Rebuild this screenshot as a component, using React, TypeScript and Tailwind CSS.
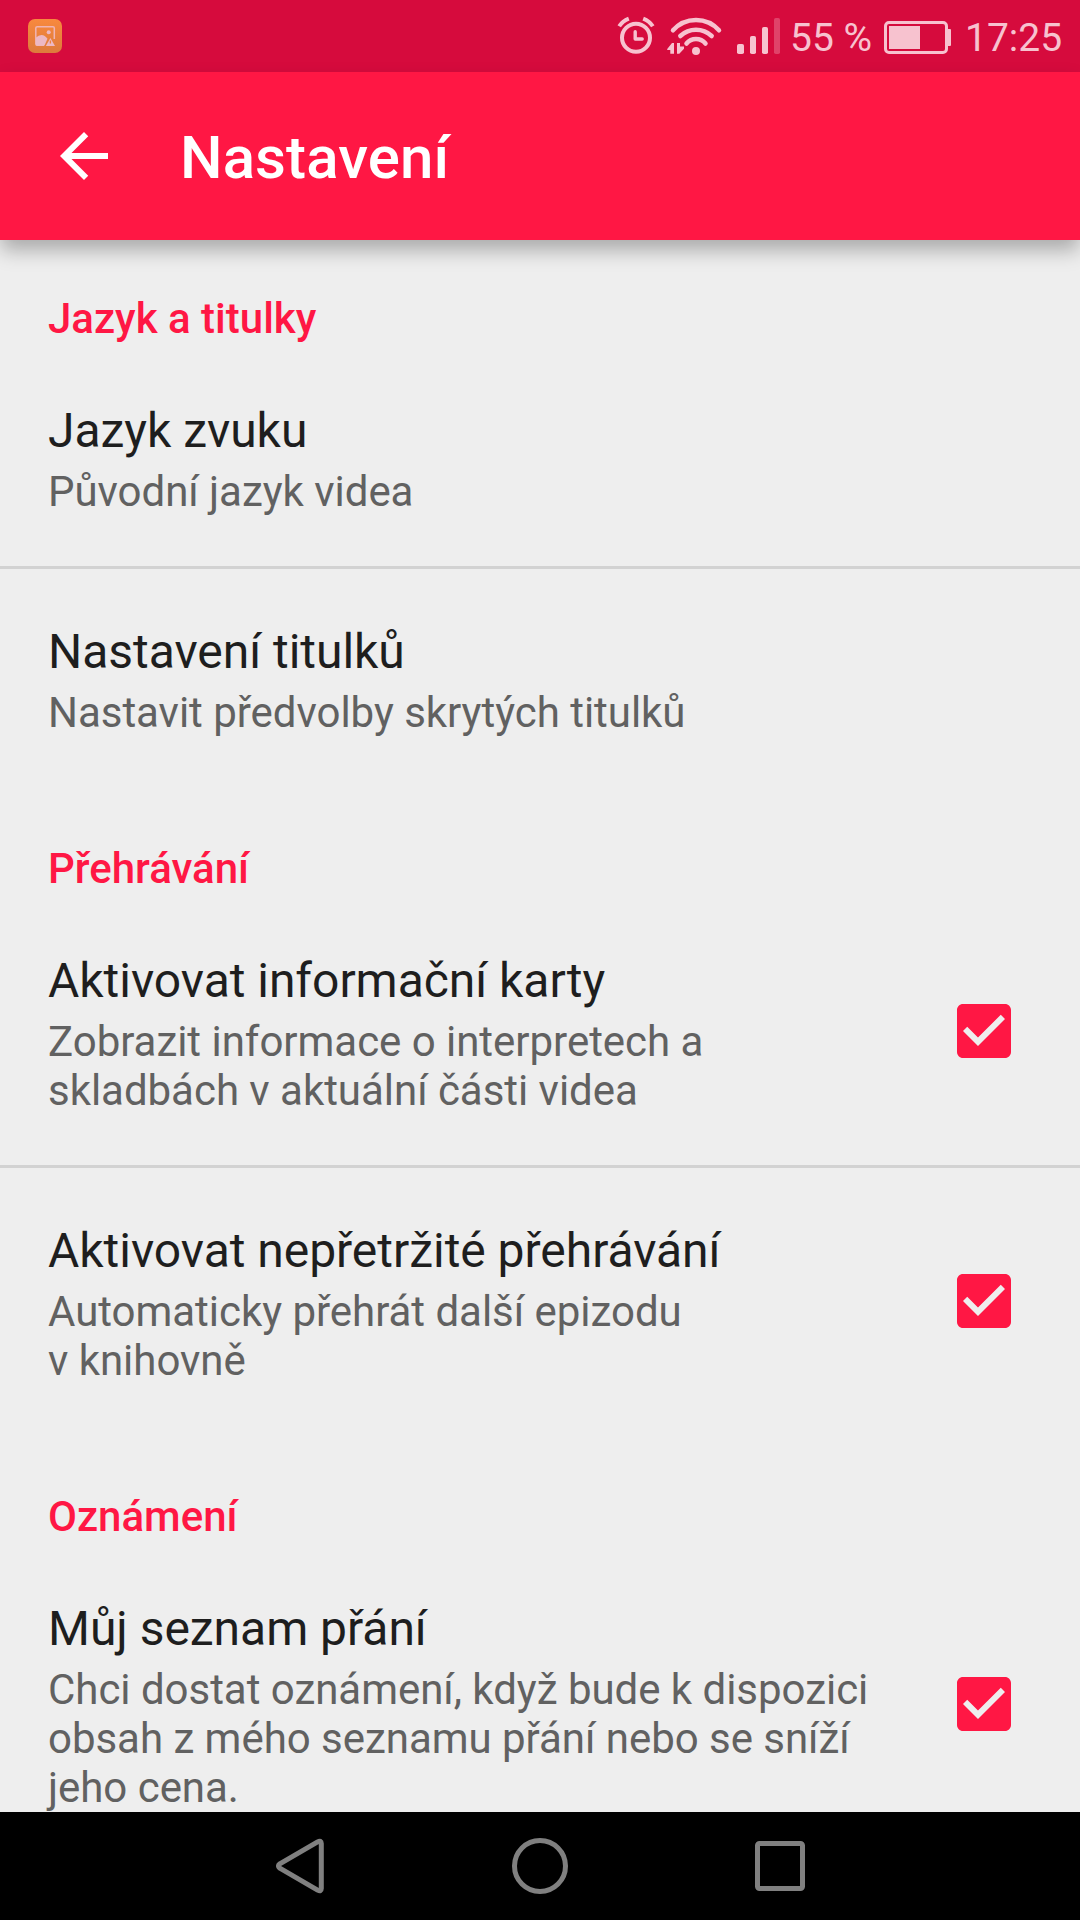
import { useState } from "react";

interface SettingItem {
  id: string;
  title: string;
  summary: string[];
  checkable?: boolean;
}

interface SettingSection {
  name: string;
  items: SettingItem[];
}

const sections: SettingSection[] = [
  {
    name: "Jazyk a titulky",
    items: [
      { id: "audio", title: "Jazyk zvuku", summary: ["Původní jazyk videa"] },
      { id: "captions", title: "Nastavení titulků", summary: ["Nastavit předvolby skrytých titulků"] },
    ],
  },
  {
    name: "Přehrávání",
    items: [
      {
        id: "cards",
        title: "Aktivovat informační karty",
        summary: ["Zobrazit informace o interpretech a", "skladbách v aktuální části videa"],
        checkable: true,
      },
      {
        id: "continuous",
        title: "Aktivovat nepřetržité přehrávání",
        summary: ["Automaticky přehrát další epizodu", "v knihovně"],
        checkable: true,
      },
    ],
  },
  {
    name: "Oznámení",
    items: [
      {
        id: "wishlist",
        title: "Můj seznam přání",
        summary: [
          "Chci dostat oznámení, když bude k dispozici",
          "obsah z mého seznamu přání nebo se sníží",
          "jeho cena.",
        ],
        checkable: true,
      },
    ],
  },
];

function StatusBar() {
  return (
    <div className="flex h-[72px] shrink-0 items-center bg-[#d60b3d] pl-7 text-[39px] leading-[72px] text-[#f7c2cf]">
      <svg className="mr-auto h-[34px] w-[34px]" viewBox="0 0 34 34">
        <defs>
          <linearGradient id="gallery" x1="0" y1="0" x2="0" y2="1">
            <stop offset="0" stopColor="#f8893e" />
            <stop offset="1" stopColor="#dd7a3c" />
          </linearGradient>
        </defs>
        <rect width="34" height="34" rx="7" fill="url(#gallery)" />
        <path d="M16 26.3H9.2Q7.8 26.3 7.8 24.9V9.1Q7.8 7.7 9.2 7.7H25Q26.3 7.7 26.3 9.1V20" fill="none" stroke="#f0b4b4" strokeWidth="1.5" />
        <circle cx="20.7" cy="13.3" r="2" fill="#ecb8c4" />
        <path d="M8 18.5Q10.5 16.3 13.5 16Q17 16.2 19.5 19.8L16.5 26.5H8Z" fill="#ecb8c4" />
        <path d="M22.4 19L27 27H17.8Z" fill="#ecb8c4" />
        <path d="M22.4 21.5v3" stroke="#ee823d" strokeWidth="1.3" />
      </svg>

      {/* Alarm */}
      <svg className="h-10 w-10" viewBox="0 0 40 40" fill="none" stroke="currentColor">
        <circle cx="20" cy="21.8" r="14" strokeWidth="4" />
        <path d="M19.2 15.8V23H26.2" strokeWidth="3.4" strokeLinecap="round" strokeLinejoin="round" />
        <path d="M3.2 10.2Q6.5 5 12.8 2.6M36.8 10.2Q33.5 5 27.2 2.6" strokeWidth="4" />
      </svg>

      {/* Wi-Fi */}
      <svg className="ml-[9px] h-10 w-[58px]" viewBox="0 0 58 40" fill="none" stroke="currentColor">
        <g strokeWidth="4.5" strokeLinecap="round">
          <path d="M8 14.3A30.8 30.8 0 0 1 54 14.3" />
          <path d="M15.3 20A23 23 0 0 1 46.7 20" />
          <path d="M21.5 27.5A12.4 12.4 0 0 1 40.5 27.5" />
        </g>
        <g fill="currentColor" stroke="none">
          <circle cx="31" cy="35" r="4" />
          <path d="M2 33.3L7 27H9V37.7H5.3V34H2.5Z" />
          <path d="M12 27H15V30.5H19V32.7L14.3 37.7H12Z" />
        </g>
      </svg>

      {/* Signal */}
      <svg className="ml-3 h-10 w-[47px]" viewBox="0 0 47 40" fill="currentColor">
        <rect x="2" y="28" width="7" height="10" rx="1.8" />
        <rect x="15" y="20" width="6" height="18" rx="1.8" />
        <rect x="27" y="11" width="6" height="27" rx="1.8" />
        <rect x="39" y="2" width="6" height="36" rx="1.8" opacity="0.3" />
      </svg>

      <span className="ml-2 w-[92px] pt-[3px] whitespace-nowrap">55 %</span>

      {/* Battery */}
      <svg className="h-10 w-[71px]" viewBox="0 0 71 40" fill="currentColor">
        <rect x="3.5" y="6.5" width="61" height="30" rx="3.5" fill="none" stroke="currentColor" strokeWidth="3" />
        <rect x="7" y="10" width="31" height="23" />
        <rect x="65" y="13" width="4" height="17" rx="1" />
      </svg>

      <span className="ml-3 w-[115px] pt-[3px] whitespace-nowrap">17:25</span>
    </div>
  );
}

function AppBar() {
  return (
    <header className="relative z-10 flex h-[168px] shrink-0 items-center bg-[#ff1744] pl-12 text-white shadow-[0_11px_19px_-1px_rgba(0,0,0,0.29)]">
      <button type="button" aria-label="Zpět">
        <svg className="h-[72px] w-[72px]" viewBox="0 0 24 24" fill="currentColor">
          <path d="M20 11H7.83l5.59-5.59L12 4l-8 8 8 8 1.41-1.41L7.83 13H20v-2z" />
        </svg>
      </button>
      <h1 className="ml-[60px] pt-1 text-[60px] leading-[70px] font-medium tracking-[0.1px]">Nastavení</h1>
    </header>
  );
}

function Checkbox({ checked }: { checked: boolean }) {
  return (
    <svg className="mb-px h-[72px] w-[72px] shrink-0 text-[#ff1744]" viewBox="0 0 24 24" fill="currentColor">
      {checked ? (
        <path d="M19 3H5c-1.11 0-2 .9-2 2v14c0 1.1.89 2 2 2h14c1.11 0 2-.9 2-2V5c0-1.1-.89-2-2-2zm-9 14l-5-5 1.41-1.41L10 14.17l7.59-7.59L19 8l-9 9z" />
      ) : (
        <path d="M19 5v14H5V5h14m0-2H5c-1.1 0-2 .9-2 2v14c0 1.1.9 2 2 2h14c1.1 0 2-.9 2-2V5c0-1.1-.9-2-2-2z" />
      )}
    </svg>
  );
}

export default function App() {
  const [checked, setChecked] = useState<Record<string, boolean>>({
    cards: true,
    continuous: true,
    wishlist: true,
  });

  const toggle = (item: SettingItem) => {
    if (!item.checkable) return;
    setChecked((prev) => ({ ...prev, [item.id]: !prev[item.id] }));
  };

  return (
    <div className="flex h-[1920px] w-[1080px] flex-col overflow-hidden bg-[#eeeeee] font-['Roboto',sans-serif]">
      <StatusBar />
      <AppBar />

      <main className="min-h-0 flex-1 overflow-hidden">
        {sections.map((section) => (
          <section key={section.name}>
            <h2 className="h-[108px] px-12 pt-[54px] text-[42px] leading-[49px] font-medium text-[#ff1744]">
              {section.name}
            </h2>
            {section.items.map((item) => (
              <div
                key={item.id}
                onClick={() => toggle(item)}
                className="flex items-center justify-between border-b-[3px] border-[#d2d2d2] pr-[60px] pl-12 last:border-transparent"
              >
                <div className="pt-[55px] pb-[50px] tracking-[-0.03px]">
                  <h3 className="text-[48px] leading-[56px] text-[#1e1e1e]">{item.title}</h3>
                  <p className="pt-2 text-[42px] leading-[49px] text-[#616161]">
                    {item.summary.map((line) => (
                      <span key={line} className="block whitespace-nowrap">
                        {line}
                      </span>
                    ))}
                  </p>
                </div>
                {item.checkable && <Checkbox checked={checked[item.id]} />}
              </div>
            ))}
          </section>
        ))}
      </main>

      {/* System navigation */}
      <nav className="flex h-[108px] shrink-0 items-center justify-center gap-[180px] bg-black text-[#808080]">
        <svg className="h-[60px] w-[60px]" viewBox="0 0 60 60" fill="none" stroke="currentColor" strokeWidth="5">
          <path d="M47.6 5.9Q51.3 4 51.3 7.5V52.5Q51.3 56 47.6 54.1L9.8 32.2Q7 30 9.8 27.8Z" strokeLinejoin="round" />
        </svg>
        <svg className="h-[60px] w-[60px]" viewBox="0 0 60 60" fill="none" stroke="currentColor" strokeWidth="5">
          <circle cx="30" cy="30" r="25.5" />
        </svg>
        <svg className="h-[60px] w-[60px]" viewBox="0 0 60 60" fill="none" stroke="currentColor" strokeWidth="5">
          <rect x="7.5" y="7.5" width="45" height="45" rx="2" />
        </svg>
      </nav>
    </div>
  );
}
